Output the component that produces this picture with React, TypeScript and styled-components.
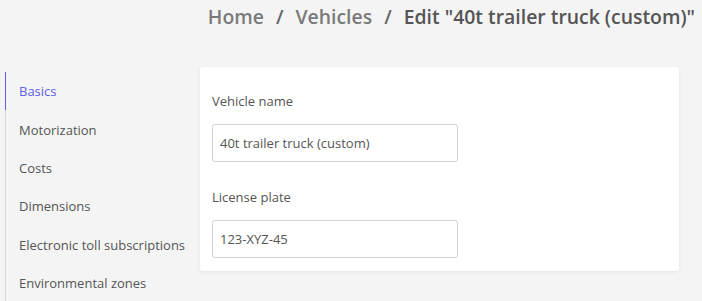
import React from 'react';
import styled, { createGlobalStyle } from 'styled-components';

const GlobalStyle = createGlobalStyle`
  html, body {
    margin: 0;
    padding: 0;
    background: #f4f4f4;
    font-family: 'Open Sans', sans-serif;
  }
`;

const Page = styled.div`
  width: 702px;
  height: 301px;
  overflow: hidden;
`;

const Breadcrumbs = styled.nav`
  display: flex;
  justify-content: flex-end;
  align-items: center;
  height: 33px;
  padding: 0 7px 0 0;
  font-size: 19.4px;
  font-weight: 600;
  color: #7a7a7a;
  white-space: nowrap;
`;

const Separator = styled.span`
  margin: 0 12px;
  color: #666;
`;

const Current = styled.span`
  color: #555;
`;

const Main = styled.div`
  display: flex;
  align-items: flex-start;
  padding: 34px 0 0 5px;
`;

const Sidebar = styled.ul`
  list-style: none;
  margin: 5px 0 0;
  padding: 0;
  width: 194px;
  border-left: 1px solid #d6d6d6;
`;

const NavItem = styled.li<{ $active?: boolean }>`
  height: 38.4px;
  display: flex;
  align-items: center;
  padding-left: 13px;
  margin-left: -1px;
  border-left: 1px solid ${(p) => (p.$active ? '#5b5fe6' : 'transparent')};
  font-size: 13px;
  color: ${(p) => (p.$active ? '#5b5fe6' : '#555')};
`;

const Card = styled.div`
  width: 479px;
  box-sizing: border-box;
  background: #fff;
  border-radius: 3px;
  box-shadow: 0 1px 4px rgba(0, 0, 0, 0.07);
  padding: 24px 12px 13px;
`;

const Field = styled.div`
  display: flex;
  flex-direction: column;
  gap: 13px;

  & + & {
    margin-top: 25px;
  }
`;

const Label = styled.label`
  font-size: 13px;
  line-height: 20px;
  color: #555;
`;

const Input = styled.input`
  width: 246px;
  height: 38px;
  box-sizing: border-box;
  border: 1px solid #cfd3db;
  border-radius: 3px;
  padding: 0 7px;
  font-family: 'Open Sans', sans-serif;
  font-size: 13px;
  color: #555;
  background: #fff;
  outline: none;
`;

const navItems = [
  'Basics',
  'Motorization',
  'Costs',
  'Dimensions',
  'Electronic toll subscriptions',
  'Environmental zones',
];

const App = () => (
  <Page>
    <GlobalStyle />
    <Breadcrumbs>
      <span>Home</span>
      <Separator>/</Separator>
      <span>Vehicles</span>
      <Separator>/</Separator>
      <Current>Edit "40t trailer truck (custom)"</Current>
    </Breadcrumbs>

    <Main>
      <Sidebar>
        {navItems.map((item, i) => (
          <NavItem key={item} $active={i === 0}>
            {item}
          </NavItem>
        ))}
      </Sidebar>

      <Card>
        <Field>
          <Label>Vehicle name</Label>
          <Input defaultValue="40t trailer truck (custom)" />
        </Field>
        <Field>
          <Label>License plate</Label>
          <Input defaultValue="123-XYZ-45" />
        </Field>
      </Card>
    </Main>
  </Page>
);

export default App;
